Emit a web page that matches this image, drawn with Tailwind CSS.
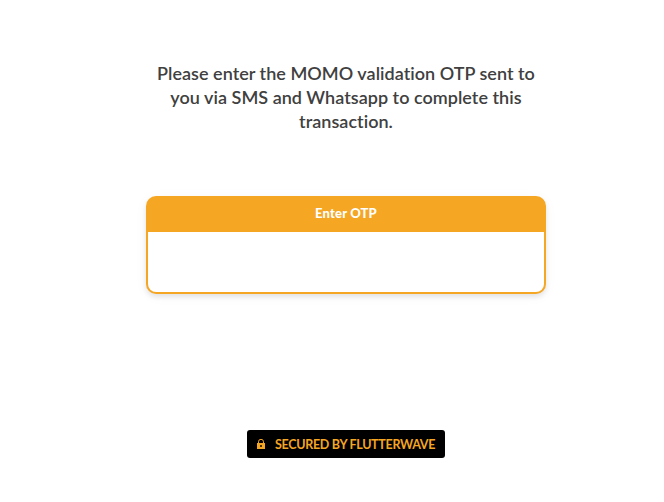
<!DOCTYPE html>
<html lang="en">
<head>
<meta charset="utf-8">
<title>Enter OTP</title>
<script src="https://cdn.jsdelivr.net/npm/@tailwindcss/browser@4"></script>
</head>
<body class="bg-white font-['Lato',sans-serif] overflow-hidden [font-variant-ligatures:none]">
<main class="ml-[146px] w-[400px] h-[502px] pt-[61px] flex flex-col items-center">
  <p class="w-[400px] text-center text-[18px] leading-6 font-semibold tracking-[0.03px] text-[#404040]">Please enter the MOMO validation OTP sent to<br>you via SMS and Whatsapp to complete this<br>transaction.</p>
  <label class="mt-[63px] flex h-[98px] w-full flex-col rounded-[10px] bg-[#f5a623] px-[2px] pb-[2px] shadow-[0_3px_5px_rgba(0,0,0,0.09),0_2px_14px_rgba(0,0,0,0.04)]">
    <span class="flex h-9 items-center justify-center pb-px text-[13px] tracking-[0.15px] font-black text-white">Enter OTP</span>
    <input class="w-full flex-1 rounded-b-lg bg-white px-4 text-center outline-none" type="text">
  </label>
  <div class="mt-[136px] flex h-7 w-[198px] items-center rounded-[3px] bg-black pl-[10px] text-[#f5a623]">
    <svg class="mr-[10px] h-[10px] w-2" viewBox="0 0 8 10"><path fill="none" stroke="currentColor" d="M1.5 4V2.8a2.3 2.3 0 0 1 5 0V4"/><path fill="currentColor" d="M0 4h8v6H0z"/><path fill="#000" fill-opacity=".7" d="M3 6h2v2H3z"/></svg>
    <span class="mt-[3px] whitespace-nowrap text-[12.5px] tracking-[-0.3px] font-bold">SECURED BY FLUTTERWAVE</span>
  </div>
</main>
</body>
</html>
